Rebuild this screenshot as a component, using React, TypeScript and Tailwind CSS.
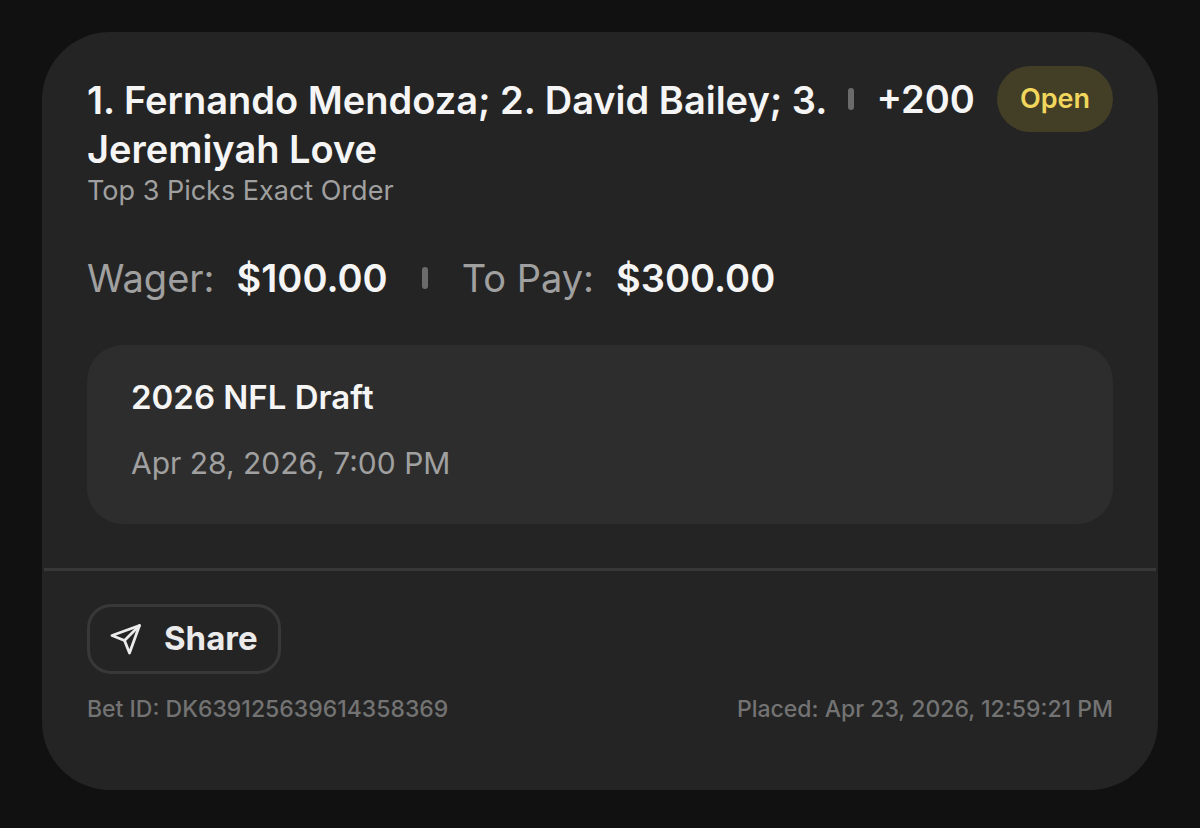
import type { ReactNode } from "react";

type Bet = {
  selection: string;
  market: string;
  odds: string;
  status: string;
  wager: string;
  toPay: string;
  event: string;
  startsAt: string;
  betId: string;
  placedAt: string;
};

const bet: Bet = {
  selection: "1. Fernando Mendoza; 2. David Bailey; 3. Jeremiyah Love",
  market: "Top 3 Picks Exact Order",
  odds: "+200",
  status: "Open",
  wager: "$100.00",
  toPay: "$300.00",
  event: "2026 NFL Draft",
  startsAt: "Apr 28, 2026, 7:00 PM",
  betId: "DK639125639614358369",
  placedAt: "Apr 23, 2026, 12:59:21 PM",
};

function Divider() {
  return <span className="h-[22px] w-1.5 shrink-0 rounded-sm bg-[#6b6b6b]" />;
}

function Amount({ label, children }: { label: string; children: ReactNode }) {
  return (
    <div className="flex gap-[22px]">
      <dt className="text-[#a0a0a0]">{label}</dt>
      <dd className="font-semibold text-[#f5f5f5]">{children}</dd>
    </div>
  );
}

function SendIcon() {
  return (
    <svg
      className="h-8 w-8"
      viewBox="0 0 32 32"
      fill="none"
      stroke="currentColor"
      strokeWidth="2.8"
      strokeLinejoin="round"
      strokeLinecap="round"
      aria-hidden="true"
    >
      <path d="M29.5 2.5 L2 12.5 L14.5 17.5 L19.5 30 Z" />
      <path d="M29.5 2.5 L14.5 17.5" />
    </svg>
  );
}

function BetCard({ bet }: { bet: Bet }) {
  return (
    <article className="overflow-hidden rounded-[68px] bg-[#242424]">
      <div className="px-[45px] pt-[34px] pb-11">
        <header className="flex items-start">
          <div className="min-w-0 flex-1 pt-2.5">
            <h1 className="text-[38px] leading-[49px] font-semibold text-[#f5f5f5]">
              {bet.selection}
            </h1>
            <p className="text-[27px] leading-[34px] text-[#a0a0a0]">{bet.market}</p>
          </div>
          <div className="flex h-[66px] items-center gap-[22px]">
            <Divider />
            <span className="text-[38px] font-semibold text-[#f5f5f5]">{bet.odds}</span>
            <span className="flex h-full items-center rounded-full bg-[#433e26] px-[23px] text-[27px] font-semibold text-[#f0d65c]">
              {bet.status}
            </span>
          </div>
        </header>

        <dl className="mt-[45px] flex items-center gap-[34px] text-[38px] leading-[50px]">
          <Amount label="Wager:">{bet.wager}</Amount>
          <Divider />
          <Amount label="To Pay:">{bet.toPay}</Amount>
        </dl>

        <section className="mt-[42px] rounded-[36px] bg-[#2d2d2d] px-11 pt-8 pb-[41px]">
          <h2 className="text-[33px] leading-[40px] font-semibold text-[#f5f5f5]">{bet.event}</h2>
          <p className="mt-[26px] text-[30px] leading-[40px] text-[#a0a0a0]">{bet.startsAt}</p>
        </section>
      </div>

      <footer className="mx-0.5 border-t-[3px] border-[#383838] px-[43px] pt-[33px] pb-[66px]">
        <button
          type="button"
          className="flex h-[70px] items-center gap-[22px] rounded-3xl border-[3px] border-[#383838] px-5 text-[33px] font-bold text-[#ebebeb]"
        >
          <SendIcon />
          Share
        </button>
        <div className="mt-5 flex justify-between text-[23px] leading-[30px] font-medium text-[#737373]">
          <span>Bet ID: {bet.betId}</span>
          <span>Placed: {bet.placedAt}</span>
        </div>
      </footer>
    </article>
  );
}

export default function App() {
  return (
    <main className="min-h-screen bg-[#111111] px-[42px] pt-8 pb-9 font-['Inter',sans-serif]">
      <BetCard bet={bet} />
    </main>
  );
}
